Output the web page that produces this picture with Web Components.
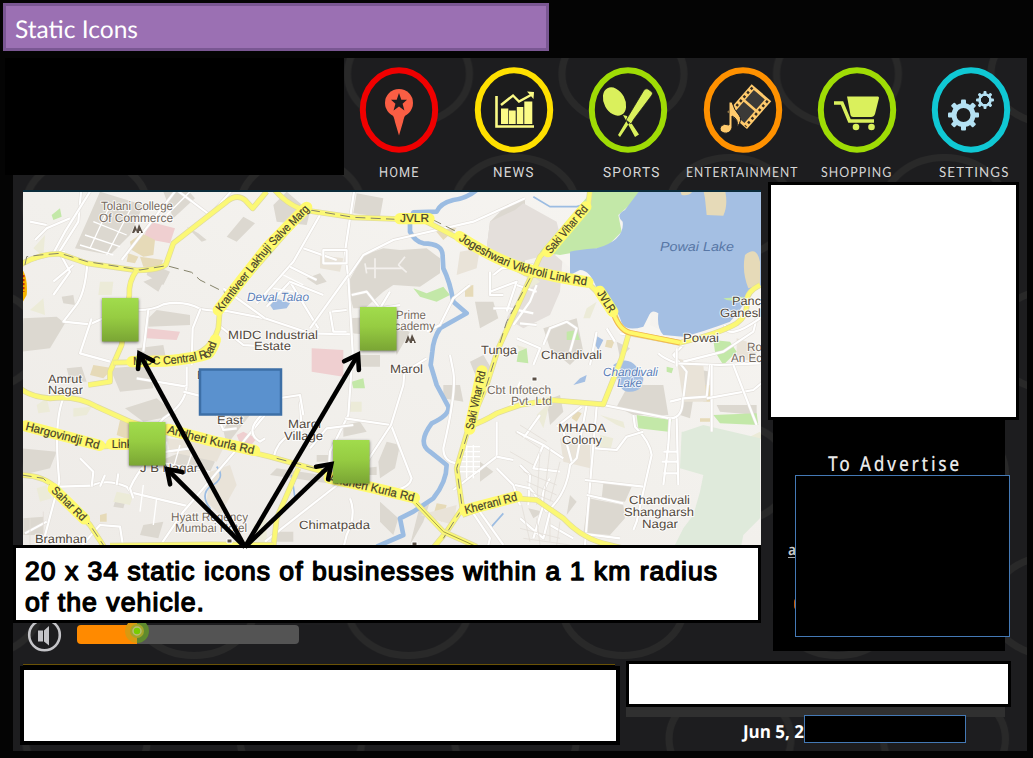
<!DOCTYPE html>
<html lang="en">
<head>
<meta charset="utf-8">
<title>Static Icons</title>
<style>
html,body{margin:0;padding:0;background:#040404;width:1033px;height:758px;overflow:hidden;font-family:"Liberation Sans",Arial,sans-serif}
</style>
</head>
<body>
<slide-page></slide-page>
<script>
/* A single line of text fitted to a given width. */
class FitText extends HTMLElement{
  connectedCallback(){
    const a=(n,d)=>this.getAttribute(n)||d;
    const w=+a('w','100'),h=+a('h','20');
    this.attachShadow({mode:'open'}).innerHTML=`<style>:host{display:block;width:${w}px;height:${h}px;flex:none}svg{display:block;overflow:visible}text{text-rendering:geometricPrecision;letter-spacing:${a('track','0')}px}</style>
    <svg width="${w}" height="${h}"><text x="0" y="${a('base',h*.8)}" textLength="${w}" lengthAdjust="${a('adjust','spacingAndGlyphs')}" font-family="${a('font','Liberation Sans')}, sans-serif" font-size="${a('size','14')}" font-weight="${a('weight','400')}" fill="${a('color','#fff')}" ${a('stroke','')?`stroke="${a('stroke')}" stroke-width="1.35" stroke-linejoin="round"`:''}>${a('label','')}</text></svg>`;
  }
}
customElements.define('fit-text',FitText);

class TitleBar extends HTMLElement{
  connectedCallback(){
    this.attachShadow({mode:'open'}).innerHTML=`<style>:host{display:flex;box-sizing:border-box;width:546px;height:48px;margin:3px 0 0 3px;border:3px solid #7a5793;background:#9b70b3;padding:11px 0 0 9px}</style>
    <fit-text w="123" h="24" base="20.500" size="24.500" font="Lato" label="Static Icons"></fit-text>`;
  }
}
customElements.define('title-bar',TitleBar);

/* Framed rectangle: white or black panel with a coloured border. */
class FrameBox extends HTMLElement{
  connectedCallback(){
    const a=n=>this.getAttribute(n);
    this.attachShadow({mode:'open'}).innerHTML=`<style>:host{display:block;box-sizing:border-box;width:${a('w')}px;height:${a('h')}px;border:${a('b')}px solid ${a('line')||'#000'};background:${a('fill')||'#fff'};flex:none}</style><slot></slot>`;
  }
}
customElements.define('frame-box',FrameBox);

/* Icons are drawn around 0,0 in pixels. */
const gear=(r,n,w,h)=>{let s='';for(let i=0;i<n;i++)s+=`<rect x="${-w/2}" y="${-r-h}" width="${w}" height="${h+2}" rx="1" transform="rotate(${i*360/n})"/>`;return s};
const ICONS={
home:`<circle cy="-7" r="14"/><path d="M-8 3 Q-5 6 -4 12 L0 25.500 L4 12 Q5 6 8 3Z"/><path fill="#1d1d1f" d="M0 -17 L2.3 -10.3 L8 -10.3 L3.6 -6.2 L5.4 .5 L0 -3.6 L-5.4 .5 L-3.6 -6.2 L-8 -10.3 L-2.3 -10.3Z"/>`,
news:`<path d="M-17.500 -14 V16.500 H20" fill="none" stroke-width="2.600"/><path stroke="none" d="M-13 -1.500h7.300v15.500h-7.300zM-5 .5h6.700v13.500h-6.700zM2.800 -3h6.500v17h-6.500zM10.300 -8.500h8v22.500h-8z"/><path d="M-13 -5 L-1 -14.500 L5 -8.500 L17 -15" fill="none" stroke-width="2.400"/><path stroke="none" d="M13 -18.500 L20 -18 L19.500 -11Z"/>`,
sports:`<ellipse cx="-13.500" cy="-8.500" rx="10.500" ry="15" transform="rotate(-28 -13.500 -8.500)"/><path d="M-5 5 L7 27 L11 24.500 L2 11 L-1 6Z M-10 25 L-1 10 L2 12 L-8 27Z"/><path stroke="#1d1d1f" stroke-width=".8" d="M-2 10 L16 -20 Q18 -22 20 -21 L24 -18 Q25 -17 24 -15 L6 9 L3 14Z"/>`,
ent:`<g transform="rotate(41 6 -3)"><path fill="#3b3a38" d="M-5 -20 H18 V15 H-5z"/><path fill-rule="evenodd" d="M-7 -22 H19 V15 H-7z M-1.500 -19 V-6 H13 V-19z M-1.500 -3.500 V12 H13 V-3.500z"/><path stroke="#332a1e" stroke-width="2.500" stroke-dasharray="2.500 3" d="M-4.200 -20V14M16 -20V14"/></g><path stroke="#1d1d1f" stroke-width="1" d="M-14 -8 L-11 -8 Q-9 0 -4 5 Q0 10 -6 17 Q-4 9 -11 6 V18 Q-13 24 -19 23 Q-25 21 -22 16 Q-19 13 -14 15Z"/>`,
shop:`<path d="M-10 -13.500 H21 Q22 -13.500 22 -12 L18 4 Q17 7 14 7 H-4 Q-6 7 -6.500 5Z"/><path d="M-23 -7 H-15 L-7.500 11 H17" fill="none" stroke-width="3.500"/><circle cx="-1" cy="17" r="3.300"/><circle cx="14.500" cy="17" r="3.300"/>`,
set:`<g transform="translate(-7.500 5)"><circle r="9.500" fill="none" stroke-width="5"/>${gear(11,8,5,4.500)}</g><g transform="translate(14 -10)"><circle r="5.500" fill="none" stroke-width="2.600"/>${gear(6,8,3,3)}</g>`};
class NavItem extends HTMLElement{
  connectedCallback(){
    const a=n=>this.getAttribute(n);
    this.attachShadow({mode:'open'}).innerHTML=`<style>:host{display:flex;flex-direction:column;align-items:center;width:114.400px;flex:none;padding-top:9px;box-sizing:border-box}svg{display:block;overflow:visible}.i{fill:${a('tint')};stroke:${a('tint')};stroke-width:0}fit-text{position:relative;left:${a('shift')||0}px;margin-top:13px}</style>
    <svg width="80" height="86" viewBox="-40 -43 80 86"><ellipse rx="36.200" ry="39.700" fill="#1c1c1d" stroke="${a('ring')}" stroke-width="6"/><g class="i">${ICONS[a('icon')]}</g></svg>
    <fit-text w="${a('w')}" h="12" base="11" size="14" track="1.2" font="${a('font')||'Roboto'}" color="#d6d6d6" label="${a('label')}"></fit-text>`;
  }
}
customElements.define('nav-item',NavItem);

/* Street map. Geometry uses a 3x grid whose origin is at map offset (-13,-7). */
class StreetMap extends HTMLElement{
  connectedCallback(){
    const T=(x,y,w,t,o='')=>`<text x="${x}" y="${y}" textLength="${w}" lengthAdjust="spacingAndGlyphs" ${o}>${t}</text>`;
    /* Road name on a yellow band; nx,ny moves the band from the text baseline to its centre line. */
    const L=(id,d,len,t,nx,ny)=>`<path d="${d}" fill="none" stroke="#fffa6e" stroke-width="34" stroke-linecap="round" stroke-linejoin="round" stroke-dasharray="${len} 2000" transform="translate(${nx} ${ny})"/><path id="${id}" d="${d}" fill="none"/><text class="road"><textPath href="#${id}" textLength="${len}" lengthAdjust="spacingAndGlyphs">${t}</textPath></text>`;
    const dup=(d,c)=>`<path d="${d}" class="${c}o"/><path d="${d}" class="${c}"/>`;
    const white=[
    'M215 0L205 110L145 205','M510 0L335 225','M480 0L600 90L680 0','M240 20L165 140L130 205','M45 230L120 210L165 200','M232 235Q225 330 195 365L160 410L240 418L280 400','M245 400L210 505L300 530','M385 375Q430 375 460 358Q520 345 572 372Q620 380 650 378L765 400L900 445L1030 448','M415 375L400 500','M572 370L548 430L545 540','M640 310L765 400','M625 420L700 480L780 485','M60 110L110 120M75 165L110 130L180 100','M150 205L180 260L130 330M130 290L190 240',
    'M380 580L530 605L530 545','M530 605Q525 660 460 700L380 795','M160 640Q130 710 148 890L100 1070','M150 905L245 902Q290 880 350 905L362 922L540 965','M540 790L470 800Q400 820 360 910L370 940','M445 1090L520 980L700 770L765 690','M245 905L250 860L210 820','M270 905L285 870M320 900L325 865','M760 685Q700 740 750 770L765 760','M45 1045L110 1010M200 1100L270 1020L330 1025L340 1090','M520 620L600 640L640 735L680 730',
    'M1035 0L1005 200L1015 280L1028 500L1015 690L960 800L955 880','M1015 275L1060 210L1150 165L1390 110L1545 40','M930 90L850 230L740 355','M770 365L840 290L925 430','M900 430L1015 270','M840 290L940 330M840 245L920 285M880 190L980 225','M940 195H1010V235H940Z','M960 380L970 440L1010 440M965 380L1010 375','M1005 700L1143 720L1205 880Q1200 905 1160 915','M1185 540L1180 600L1143 720L1045 870','M1250 520L1185 560','M1320 510L1330 560Q1340 620 1300 790Q1300 830 1340 835','M790 820Q800 770 840 750L870 730M870 650L875 740','M770 645L870 630L880 690','M1020 940Q1040 990 1010 1050L1000 1090','M765 1070L1020 870','M1030 720L950 730L900 790','M1170 360L1110 370L1070 320L1025 330M1140 320L1110 370',
    'M1440 320L1520 290L1490 380M1450 370H1510M1250 440L1290 420L1330 340L1380 300M1450 270L1475 250L1570 240M1440 260V330L1480 330',
    'M1510 420L1560 350L1580 300M1530 415L1580 420M1500 370L1570 385M1580 320L1520 300',
    'M2240 400L2230 440L2140 500L2020 530','M2020 480L1990 510L2030 560L2020 640L1980 650','M2020 480Q1930 460 1830 445','M2145 420Q2150 470 2250 400','M1945 505Q1960 520 2000 535L2130 540L2250 535','M1780 660L1980 700Q2020 700 2018 640L2090 635L2100 540','M2105 540L2105 740','M2090 640L2230 615L2260 590','M2170 540L2240 720','M1870 690L1875 725Q1920 770 1925 810L1900 920L1880 1010L1870 1035','M1760 665L1745 840L1725 1080L1745 1095','M1730 660L1700 820L1680 840Q1670 930 1610 980','M1715 665L1640 725M1685 830L1660 740','M1980 700L1975 780L1960 900M2000 700L2005 900M1960 800H2005M1955 830H2005M1960 865H2005','M1755 790L1820 795L1850 755L1900 740','M1730 930L1840 955','M1725 885L1900 905','M1710 1045L1830 1060','M1460 710L1460 815L1330 915','M1460 815L1510 825M1460 850L1510 900L1530 960','M1620 880Q1580 940 1610 980M1530 840L1560 870L1555 960','M1520 740L1600 780L1660 820M1600 780L1570 850L1650 860M1590 690L1540 760','M1530 1000L1600 1060L1620 980M1515 900L1560 910L1600 960L1570 1060M1620 1020L1690 1060','M1380 970L1440 1060L1430 1100','M1395 960L1480 1080','M1520 460L1590 490L1570 540M1600 480L1620 430L1670 410L1700 430L1680 500M1760 440L1740 540','M1790 430L1815 470M2000 490L2000 545'
    ];
    const yel=['M35 237Q90 205 150 207L232 235L380 256Q450 255 468 238L490 175L560 120L650 50Q680 25 705 45L728 70L770 20','M380 256Q355 290 358 330L335 480L300 560L300 590L235 600','M310 533L470 530Q600 520 625 430L630 370L900 60','M790 10Q840 70 900 78L1030 97L1240 105L1545 265L1640 280L1740 300L1810 370Q1820 430 1860 445L2010 473Q2130 445 2180 415Q2215 390 2210 350Q2210 320 2250 300','M1740 15L1735 60L1590 215L1540 325L1465 490L1430 600L1375 730L1340 850L1357 970L1310 1040L1260 1100','M1375 725Q1420 710 1460 685L1530 660L1620 645L1780 658L1835 520L1855 450','M30 610Q60 635 120 640Q200 630 260 665L360 710L480 745L780 815L1010 880L1200 935L1300 1040L1400 1085','M30 720L160 760L270 785L370 780','M30 870Q100 870 140 910L240 1020L285 1090','M865 850L800 1000L790 1090','M1357 990L1440 960L1515 940L1580 945L1660 1000Q1720 1065 1800 1080L1840 1090','M300 1082L600 1078L790 1080'];
    this.attachShadow({mode:'open'}).innerHTML=`<style>
:host{display:block;width:738px;height:353px;overflow:hidden;background:#f1efeb}
svg{display:block;font-family:"Liberation Sans",Arial,sans-serif;text-rendering:geometricPrecision}
.w{fill:none;stroke:#fff;stroke-width:6.500;stroke-linejoin:round}.wo{fill:none;stroke:#e3dfda;stroke-width:10;stroke-linejoin:round}
.y{fill:none;stroke:#fbf875;stroke-width:13;stroke-linejoin:round}.yo{fill:none;stroke:#dfdaa0;stroke-width:17;stroke-linejoin:round}
.road{font-size:35px;fill:#453e2b;stroke:#453e2b;stroke-width:.6}
.lab text{font-size:12px;fill:#544a40;stroke:#fff;stroke-width:2;stroke-opacity:.8;paint-order:stroke;stroke-linejoin:round}
.lab .b{fill:#5b7fb8;font-style:italic}.lab .p{fill:#766b60}
.g{fill:#dcd8d0}.r{fill:#efcfd0}.t{fill:#e6dab8}.n{fill:#c3e8a8}.c{fill:#ecebd8}.a{fill:#a4bfe3}.k{fill:#e9e3d8}
.rail{fill:none;stroke:#85836a;stroke-width:3;stroke-dasharray:30 16}
.riv{fill:none;stroke:#9bbce2;stroke-width:14;stroke-linejoin:round}
</style>
<svg width="738" height="353" viewBox="23 192 738 353">
<defs><linearGradient id="base" x1="0" y1="1" x2="1" y2="0"><stop offset="0" stop-color="#eeebe7"/><stop offset=".5" stop-color="#f2f0ec"/><stop offset="1" stop-color="#f7f5f2"/></linearGradient></defs>
<rect x="23" y="192" width="738" height="353" fill="url(#base)"/>
<g transform="translate(10 185) scale(.33333)">
<path class="g" d="M235 100L270 20L400 60L360 150L300 210L195 190ZM650 155L700 95L735 115L680 170ZM40 400L140 395L165 415L120 490L35 500ZM415 400L440 375L540 390V420L415 425ZM380 490L460 480L470 530H385ZM155 335L190 330L195 360L160 355ZM565 145L590 165L575 170L530 125ZM460 20L520 0L555 40L490 100ZM475 260L445 320L400 290ZM420 235L480 260L460 300L410 270ZM170 550L215 545L230 590L180 590Z"/>
<path class="g" d="M35 790L140 800L120 850L35 870ZM300 550L420 540L430 610L330 620ZM345 670L440 640L500 690L400 710ZM640 735L690 650L720 690L650 780ZM445 830L540 790L615 830L600 860L480 850ZM315 950L350 935L340 970L310 965ZM400 1020L460 1010L445 1060L390 1050ZM40 1000L100 995V1050H40Z"/>
<path class="g" d="M790 60L830 20L900 80L890 120L800 110ZM1040 25L1120 40L1110 95L1030 85ZM1060 210L1120 190L1170 195L1250 190L1290 220L1290 265L1230 305L1150 300L1120 320L1065 370L1030 370L1010 300ZM890 280L930 265L950 290L920 300ZM1395 350L1450 350L1465 400L1410 430ZM1440 110L1490 60L1545 40V270L1430 190ZM1020 400L1090 395L1080 450L1025 445ZM1140 420L1200 440L1160 510ZM1050 510H1110V545H1050Z"/>
<path class="g" d="M1130 770L1170 780L1155 850L1110 880L1105 830ZM1000 720L1050 710L1070 740L1000 755ZM920 810H960V830H920ZM1060 850L1100 845L1100 870H1060ZM1110 950L1165 1000L1150 1050L1110 1010ZM1230 960L1260 950L1240 1010L1200 1080ZM1410 830L1450 860L1410 890ZM1380 530L1420 510L1450 560L1400 580ZM800 850L1000 880L990 900L780 870ZM1300 600H1350L1360 650L1300 640ZM800 1040H850V1070H800Z"/>
<path fill="#e4dfdb" d="M1515 75L1540 55L1640 110L1660 190L1650 320L1620 390L1540 430L1490 400L1560 280L1590 215L1490 240L1430 190L1440 110Z"/>
<path fill="none" stroke="#f3f0ed" stroke-width="5" d="M1065 250H1180M1095 220V280M1165 240L1185 215M1165 240L1190 262M1070 265L1065 235"/>
<path class="g" d="M1600 430L1700 400L1720 500L1680 540L1620 490ZM1880 600L1960 600L1975 690L1870 690L1820 665L1850 610ZM2000 540L2100 560L2090 630L2030 590ZM1780 895L1865 905L1845 950L1775 940ZM1735 940L1840 960L1845 1000L1800 1050L1720 1045ZM1610 645L1650 630L1660 680L1620 720ZM2020 640L2050 640L2040 700L2010 690ZM2120 660L2240 660L2240 690L2130 680ZM1820 470L1860 490L1830 520ZM1670 990L1680 930L1700 950ZM1555 970L1600 980L1570 1000Z"/>
<path class="r" d="M400 160L420 110L495 130L480 175ZM410 430L510 440L500 465L410 460ZM905 490L1000 495L1000 575L905 560ZM680 750L700 740L740 760L720 785L690 775Z"/>
<path class="t" d="M360 170L395 145L435 165L430 210L400 215L365 195ZM355 205L385 215L375 235L350 230ZM390 215L460 225L450 250L400 245ZM250 540L310 550L280 580L240 570ZM330 705L370 720L360 765L320 750ZM270 990L290 985L290 1010L270 1010ZM1270 130L1340 130L1300 165ZM1365 305L1390 300V335H1365ZM1280 955L1310 960L1295 1010L1270 990ZM1790 465L1815 465L1805 490L1785 485ZM2080 600L2100 600V650H2080ZM1695 675L1715 685L1700 710L1685 700ZM2070 700L2100 700V710H2070Z"/>
<path class="k" d="M1350 200L1410 190L1400 250L1340 270ZM1650 760L1740 780L1740 850L1660 830ZM600 860L660 840L680 900L630 990L590 950ZM930 210L1000 220L990 260L930 250ZM470 760L570 770L640 790L620 830L480 800ZM1230 990L1340 960L1330 1020ZM2000 520L2080 540L2090 650L2020 650ZM2180 460L2240 480L2240 530L2180 520Z"/>
<path class="c" d="M70 190L105 150L100 215ZM60 375L100 340L105 390ZM270 290H310L305 330H265ZM80 660L110 640L120 680L85 685ZM190 670L245 665L230 690L190 695ZM80 910L110 900L125 940L90 950ZM1020 650H1055V680H1020ZM1540 250L1590 290L1560 310ZM1730 370L1760 350L1740 400L1720 400ZM1770 690L1840 710L1845 730L1820 720ZM1770 750L1810 760L1800 800L1770 790ZM1580 690L1620 650L1600 730ZM1520 480L1550 490L1540 520ZM2180 800L2230 770L2260 760L2250 740L2180 775ZM320 920L370 930L360 960L310 950ZM730 1020L770 1000L770 1080L740 1090Z"/>
<path class="n" d="M125 90L150 70L155 95L130 105ZM1210 310L1250 325L1300 305L1320 330L1280 350L1230 335ZM1670 440L1700 435L1710 465L1670 465ZM1525 500L1550 490L1555 535L1520 530ZM2110 465L2160 470L2180 500L2140 540L2115 500ZM1880 690L1985 705L1975 740L1885 730ZM2110 690L2240 685L2245 720L2130 715ZM1025 590L1060 580L1065 610L1030 610ZM1970 545L1990 550L1985 565L1970 560Z"/>
<path fill="#dfeadb" d="M2020 740L2080 720L2250 760V1000L2200 1050L2190 1100H1985L2020 1030L2050 990L2070 920L2080 870L2010 850L2015 740Z"/>
<path fill="#f7f5f1" d="M1635 210L1700 160L1840 110L1850 50L1950 20L1920 420L2010 460L2180 420L2080 480L1830 450L1740 300Z"/>
<path class="n" d="M1745 20L1890 15L1870 50L1825 90L1835 140L1790 185L1650 210L1590 200Z"/>
<path class="a" d="M1680 200Q1700 195 1760 190Q1845 165 1838 110Q1815 90 1845 75L1890 15H2255V300L2210 340Q2190 380 2160 410Q2080 440 2020 455L1960 450Q1940 430 1945 385Q1925 370 1915 395L1900 425Q1850 440 1835 415Q1820 360 1760 310Q1740 255 1710 255L1680 270Z"/>
<path class="t" d="M2080 15H2145Q2155 60 2140 92L2090 90L2085 40ZM2010 15H2050Q2040 35 2015 30ZM2205 210Q2240 180 2250 230V300L2215 310Q2195 260 2205 210Z"/><path class="n" d="M2140 340L2200 335L2190 350L2150 345Z"/>
<path class="a" d="M770 345L785 335L840 355L830 370L790 375ZM1755 450L1780 465L1765 495L1750 470ZM1810 540Q1850 510 1880 545L1900 580Q1900 620 1860 620Q1830 625 1820 570ZM1690 600L1710 580L1730 570L1725 590L1690 600Z"/>
<path class="riv" d="M1400 15Q1370 40 1330 45Q1290 55 1280 80L1210 82L1200 115V140Q1215 170 1240 175Q1300 175 1298 215L1300 250Q1320 290 1330 350L1370 385L1290 430Q1270 460 1267 500L1262 540L1280 600L1315 665Q1320 690 1265 715Q1220 775 1260 800L1310 840Q1310 890 1270 940L1210 980L1170 1000L1180 1050L1100 1085"/>
<path fill="none" stroke="#9bbce2" stroke-width="5" d="M1570 35L1620 65L1700 65L1735 55M620 845Q650 880 600 905Q570 930 600 970L595 1010M865 860L840 920M1440 1030L1480 985M845 870L855 940"/>
${white.map(d=>dup(d,'w')).join('')}
<path fill="none" stroke="#fff" stroke-width="4" d="M210 180L310 210M225 150L330 185M250 110L350 150M300 60L240 190M360 75L290 210M470 90L540 20M790 310L850 320M820 270L880 300M1350 785H1410M1350 800H1410M1350 815H1410M1350 830H1410M1350 845H1410M1350 860H1410M1370 780V880M1390 780V880M440 830L600 860M470 770L450 840M510 780L490 850M550 790L530 850M400 900L390 980M440 940L430 1020M1530 590L1500 660"/>
<path fill="none" stroke="#e3dfd9" stroke-width="2.500" d="M1515 740L1590 790M1530 720L1610 770M1500 800L1570 840M1540 860L1640 900M1550 890L1640 930M1560 920L1630 950M1590 800L1580 960M1620 790L1600 960M1650 830L1620 950M1535 960L1560 1070M1580 1000L1590 1080M1620 1000V1070M1650 1010L1640 1080M1530 1030L1650 1060M1540 1060L1680 1080M60 1000V1080M100 980V1060"/>
${yel.map(d=>dup(d,'y')).join('')}
<path fill="none" stroke="#f2b84e" stroke-width="17" d="M1805 370Q1825 435 1860 443L2010 473"/><path fill="none" stroke="#fff96a" stroke-width="11" d="M1805 370Q1825 435 1860 443L2010 473"/>
<path class="rail" d="M45 240L50 215L90 210L150 205L232 230L390 255L470 242L545 262L570 285L650 325M900 75L1030 97L1180 104L1270 105L1350 145M1560 280L1490 410L1430 600L1375 740L1340 850L1357 970L1300 1060M35 870L100 880L240 1020L280 1080M800 820L960 862"/>
<path fill="none" stroke="#a5a046" stroke-width="3" d="M1200 935L1300 1040L1400 1085"/>
<path fill="#f7b500" d="M30 245Q55 270 50 330L30 365Z"/><path d="M34 260V325M40 270V320" stroke="#c22b0b" stroke-width="7" stroke-dasharray="7 5"/>
${L('p1','M634 382L706 289L781 194L903 70',407,'Krantiveer Lakhuji Salve Marg',-9,-7)}
${L('p2','M370 540L470 538Q560 530 600 515Q620 490 628 440',278,'MIDC Central Road',-4,-10)}
${L('p3','M1170 112H1270',87,'JVLR',0,-11)}
${L('p4','M1345 165Q1460 240 1545 262Q1620 285 1740 303',412,'Jogeshwari Vikhroli Link Rd',4,-10)}
${L('p5','M1622 208L1745 62',176,'Saki Vihar Rd',-8,-8)}
${L('p6','M1760 325L1805 395',72,'JVLR',9,-6)}
${L('p7','M1390 735L1428 555',178,'Saki Vihar Rd',-11,-3)}
${L('p8','M45 734L280 796',228,'Hargovindji Rd',3,-11)}
${L('p9','M305 788L390 788',62,'Link',0,-11)}
${L('p10','M470 744L600 778L760 814',268,'Andheri Kurla Rd',3,-11)}
${L('p11','M955 890L1085 919L1220 952',262,'Andheri Kurla Rd',3,-11)}
${L('p12','M1367 987L1530 944',162,'Kherani Rd',-3,-11)}
${L('p13','M122 919L235 1029',130,'Sahar Rd',8,-8)}
</g>
<g class="lab">
${T(101,210,72,'Tolani College','class="p"')}${T(99,221.5,74,'Of Commerce','class="p"')}
${T(247,301,62,'Deval Talao','class="b"')}
${T(228,338.5,90,'MIDC Industrial')}${T(254,350,37,'Estate')}
${T(396,319,30,'Prime','class="p"')}${T(388,330,47,'academy','class="p"')}
${T(481,354,36,'Tunga')}${T(390,373,33,'Marol')}
${T(660,251,74,'Powai Lake','class="b" style="font-size:13px;stroke:none;fill:#5877a6"')}
${T(732,305,29,'Panc')}${T(720,317,41,'Ganesl')}${T(683,342,36,'Powai')}${T(747,351,15,'Ro','class="p"')}${T(731,362,31,'An Ec','class="p"')}
${T(541,358.500,61,'Chandivali')}
${T(48,382.500,34,'Amrut')}${T(48,394,35,'Nagar')}
${T(197,379,8,'E')}${T(217,424,26,'East')}${T(140,472,58,'J B Nagar')}
${T(171,521,77,'Hyatt Regency','class="p"')}${T(175,532,72,'Mumbai Hotel','class="p"')}
${T(35,542.500,52,'Bramhan')}
${T(288,427.500,33,'Marol')}${T(284,440,39,'Village')}${T(299,529,71,'Chimatpada')}
${T(487,393.500,64,'Cbt Infotech','class="p"')}${T(511,404.500,41,'Pvt. Ltd','class="p"')}
${T(603,376,55,'Chandivali','class="b"')}${T(617,387,25,'Lake','class="b"')}
${T(558,431.500,48,'MHADA')}${T(562,443.500,40,'Colony')}
${T(629,503.500,61,'Chandivali')}${T(624,515.500,70,'Shangharsh')}${T(642,527.500,36,'Nagar')}
</g>
<g fill="#5b5046"><path d="M132 233l3-8 2 5 2-6 4 9h-2v-2h-2v2h-2l-1-3-2 3zM405 343l3-8 2 5 2-6 4 9h-2v-2h-2v2h-2l-1-3-2 3z"/><path stroke="#fff" d="M532 377h5v4h-5zM227 539h5v4h-5zM412 542h5v4h-5z"/></g>
</svg>`;
  }
}
customElements.define('street-map',StreetMap);

/* Business markers, the vehicle marker and the arrows pointing at them. */
class MapNotes extends HTMLElement{
  connectedCallback(){
    const arrow=(x,y)=>{const a=Math.atan2(547-y,245-x),p=(d,r)=>`${(x+Math.cos(a+d)*r).toFixed(1)} ${(y+Math.sin(a+d)*r).toFixed(1)}`;
      return `<path d="M245 547L${p(0,3)}"/><path stroke-linecap="round" d="M${p(.5,18)}L${p(0,3)}L${p(-.5,18)}"/>`};
    const sq=(x,y)=>`<rect x="${x}" y="${y}" width="36.500" height="43.500" fill="url(#gr)" style="filter:drop-shadow(0 1px 1.500px #0008)"/>`;
    this.attachShadow({mode:'open'}).innerHTML=`<style>:host{display:block;width:738px;height:353px}svg{display:block}</style>
<svg width="738" height="357" viewBox="23 192 738 357"><defs><linearGradient id="gr" x2="0" y2="1"><stop offset="0" stop-color="#a1dc4c"/><stop offset=".45" stop-color="#96cc42"/><stop offset="1" stop-color="#7aa534"/></linearGradient></defs>
<rect x="200" y="369.500" width="81" height="45" fill="#5a91ce" stroke="#3d6fa6" stroke-width="2.500"/>
${sq(102,298)}${sq(360,307)}${sq(129,422)}${sq(333,440)}
<g fill="none" stroke="#000" stroke-width="4.600">${arrow(138,351)}${arrow(359.5,352)}${arrow(165,467)}${arrow(333.5,462)}</g></svg>`;
  }
}
customElements.define('map-notes',MapNotes);

class VolumeBar extends HTMLElement{
  connectedCallback(){
    this.attachShadow({mode:'open'}).innerHTML=`<style>:host{display:flex;height:38px;overflow:hidden;padding-left:14px}svg{display:block;flex:none}.t{width:222px;height:19px;margin:2px 0 0 14px;border-radius:4px;background:linear-gradient(90deg,#ff8a00 60px,#545454 60px);position:relative}.k{position:absolute;left:47.500px;top:-6px}</style>
<svg width="36" height="34" viewBox="0 4 36 34"><circle cx="17.500" cy="16" r="15.300" fill="none" stroke="#c4c4c8" stroke-width="2.600"/><path fill="#c4c4c8" d="M11 11.500h5v11h-5zM17 11.500L22 7v19.500L17 22.500z"/></svg>
<div class="t"><svg class="k" width="24" height="24"><path d="M12 0a12 12 0 0 1 0 24z" fill="#5f8a2e"/><path d="M12 0a12 12 0 0 0 0 24z" fill="#d89a10"/><circle cx="12" cy="12" r="7" fill="#a4a52a"/><circle cx="12" cy="12" r="4" fill="#78cc00" stroke="#b7bd7a" stroke-width="1.500"/></svg></div>`;
  }
}
customElements.define('volume-bar',VolumeBar);

class AdPanel extends HTMLElement{
  connectedCallback(){
    this.attachShadow({mode:'open'}).innerHTML=`<style>:host{display:block;position:relative;width:232px;height:231px;margin-left:5px;background:#000}fit-text{position:relative}.h{padding:33px 0 0 55px}.cov{position:absolute;left:22px;top:55px}.a{position:absolute;left:15px;top:121px;border-bottom:1px solid #aaa}.o{position:absolute;left:21px;top:178px;width:8px;height:12px;border-radius:6px;background:#c25a08}</style>
<div class="h"><fit-text w="134" h="20" base="18" size="20.500" font="Noto Sans" color="#e8e8e8" track="3.2" weight="500" label="To Advertise"></fit-text></div>
<div class="a"><fit-text w="8" h="16" base="14" size="15" font="Noto Sans" weight="600" color="#ccc" label="a"></fit-text></div><div class="o"></div>
<frame-box class="cov" w="215" h="162" b="1" line="#4479b5" fill="#000"></frame-box>`;
  }
}
customElements.define('ad-panel',AdPanel);

class DevicePanel extends HTMLElement{
  connectedCallback(){
    this.attachShadow({mode:'open'}).innerHTML=`<style>
:host{display:block;position:relative;width:1014px;height:693px;margin:7px 0 0 13px;background:#1d1d1f}
.bg{position:absolute;inset:0}
.page{position:relative;display:flex;flex-direction:column}
header{display:flex;height:124px}
.cover{width:339px;height:117px;margin-left:-8px;background:#000;flex:none}
nav{display:flex;margin-left:-1.800px}
.mid{display:flex;height:479px}
.left{width:748px;flex:none}
.map{position:relative;margin:8px 0 0 10px;border-top:2px solid #0b2c3b;width:738px;height:353px}
map-notes{position:absolute;left:0;top:0}
.cap{position:relative;padding:10px 0 0 9px;display:flex;flex-direction:column;gap:5px}
.right{margin-left:7px}
.foot{display:flex;height:90px}
.news{margin-left:7px;width:600px;padding-top:3px}
.line{height:2px;width:592px;margin-left:3px;background:linear-gradient(#6a5206 1px,#000 1px)}
.info{margin-left:6px}
.bar{width:379px;height:10px;background:#303030}
.date{display:flex;height:26px;margin:-2px 0 0 117px}
.date fit-text{margin-top:6px}
</style>
<svg class="bg" width="1014" height="693"><defs><pattern id="rings" patternUnits="userSpaceOnUse" x="395.500" y="16" width="214.500" height="266"><g fill="none" stroke="#292929" stroke-width="7"><ellipse cx="0" cy="0" rx="61" ry="49.500"/><ellipse cx="214.500" cy="0" rx="61" ry="49.500"/><ellipse cx="0" cy="266" rx="61" ry="49.500"/><ellipse cx="214.500" cy="266" rx="61" ry="49.500"/><ellipse cx="107" cy="133" rx="61" ry="49.500"/></g></pattern></defs><rect width="1014" height="693" fill="url(#rings)"/></svg>
<div class="page">
<header><div class="cover"></div><nav>
<nav-item icon="home" label="HOME" w="40.500" ring="#f00000" tint="#fa5e44" shift="-.5"></nav-item>
<nav-item icon="news" label="NEWS" w="41.500" ring="#ffe000" tint="#fbfa86"></nav-item>
<nav-item icon="sports" label="SPORTS" w="57.500" ring="#9fdc05" tint="#daf05c" shift="4"></nav-item>
<nav-item icon="ent" label="ENTERTAINMENT" w="112.500" ring="#ff9100" tint="#ffca6c" font="Lato"></nav-item>
<nav-item icon="shop" label="SHOPPING" w="71.500" ring="#9fdc05" tint="#daf05c" font="Lato"></nav-item>
<nav-item icon="set" label="SETTINGS" w="70.500" ring="#10c8d4" tint="#b4e1f3" shift="3" font="Lato"></nav-item>
</nav></header>
<div class="mid"><div class="left">
<div class="map"><street-map></street-map><map-notes></map-notes></div>
<frame-box w="748" h="78" b="3"><div class="cap">
<fit-text w="693" h="26" base="22" size="26" track="1" color="#000" stroke="#000" label="20 x 34 static icons of businesses within a 1 km radius"></fit-text>
<fit-text w="180" h="26" base="22" size="26" track="1" color="#000" stroke="#000" label="of the vehicle."></fit-text></div></frame-box>
<volume-bar></volume-bar>
</div>
<div class="right"><frame-box w="251" h="238" b="3"></frame-box><ad-panel></ad-panel></div></div>
<div class="foot"><div class="news"><div class="line"></div><frame-box w="600" h="79" b="4"></frame-box></div>
<div class="info"><frame-box w="385" h="46" b="3"></frame-box><div class="bar"></div>
<div class="date"><fit-text w="61" h="20" base="17" size="18" font="Open Sans" weight="700" label="Jun 5, 2"></fit-text><frame-box w="162" h="28" b="1" line="#4479b5" fill="#000"></frame-box></div></div></div>
</div>`;
  }
}
customElements.define('device-panel',DevicePanel);

class SlidePage extends HTMLElement{
  connectedCallback(){
    this.attachShadow({mode:'open'}).innerHTML=`<style>:host{display:flex;flex-direction:column;width:1033px;height:758px;background:#040404}</style><title-bar></title-bar><device-panel></device-panel>`;
  }
}
customElements.define('slide-page',SlidePage);
</script>
</body>
</html>
